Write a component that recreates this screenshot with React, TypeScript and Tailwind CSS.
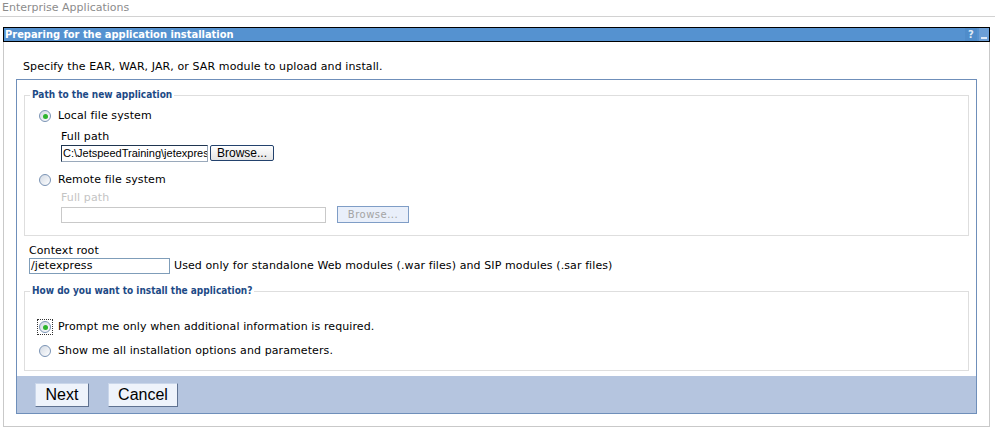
const Radio = ({ checked, focus }: { checked?: boolean; focus?: boolean }) => (
  <span
    className={`flex h-[14px] w-[14px] shrink-0 items-center justify-center ${
      focus ? "outline-1 outline-dotted outline-[#333]" : ""
    }`}
  >
    <span className="flex h-[12px] w-[12px] items-center justify-center rounded-full border border-[#7a93b4] bg-gradient-to-br from-[#d3dae4] to-white">
      {checked && <span className="h-[5px] w-[5px] rounded-full bg-[#2db42d]" />}
    </span>
  </span>
);

const Legend = ({ children }: { children: string }) => (
  <legend className="ml-[5px] px-[2px] font-['DejaVu_Sans_Condensed','DejaVu_Sans',sans-serif] text-[10px] font-bold leading-[14px] tracking-normal text-[#1d4a86]">
    {children}
  </legend>
);

const App = () => {
  return (
    <div className="h-[437px] w-[998px] overflow-hidden bg-white font-['DejaVu_Sans',sans-serif] text-[11px] tracking-[0.1px] text-black">
      <div className="h-[17px] w-[995px] border-b border-[#d2d2d2] pl-[2px] text-[11px] leading-[16px] tracking-normal text-[#8c8c8c]">
        Enterprise Applications
      </div>

      <div className="ml-[3px] mt-[10px] w-[987px]">
        {/* title bar */}
        <div className="flex h-[15px] items-center justify-between border border-black bg-[#5592d0] pl-[1px]">
          <span className="font-['DejaVu_Sans_Condensed','DejaVu_Sans',sans-serif] text-[11px] font-bold leading-[13px] tracking-normal text-white">
            Preparing for the application installation
          </span>
          <div className="flex h-full items-center">
            <span className="flex h-full w-[12px] items-center justify-center bg-[#4f8cca] text-[10px] font-bold text-[#dfe9f6]">?</span>
            <span className="ml-[2px] flex h-full w-[10px] items-end justify-center bg-[#6d9fd6] pb-[2px]">
              <span className="h-[2px] w-[6px] bg-[#dfe9f6]" />
            </span>
          </div>
        </div>

        <div className="border-x border-b border-[#c9c9c9] px-[12px] pb-[12px] pt-[18px]">
          <p className="ml-[7px] leading-[14px]">Specify the EAR, WAR, JAR, or SAR module to upload and install.</p>

          <div className="mt-[5px] border border-[#6f8fba]">
            <div className="px-[7px] pt-[8px]">
              {/* path fieldset */}
              <fieldset className="border border-[#dedede] pb-[12px]">
                <Legend>Path to the new application</Legend>
                <div className="pl-[13px] pt-[7px]">
                  <div className="flex h-[14px] items-center">
                    <Radio checked />
                    <span className="ml-[6px] leading-[14px]">Local file system</span>
                  </div>
                  <div className="ml-[23px] mt-[7px] leading-[14px]">Full path</div>
                  <div className="ml-[23px] mt-[1px] flex items-start">
                    <div className="h-[17px] w-[147px] overflow-hidden whitespace-nowrap border border-[#1f3550] border-b-[#9aa9bb] border-r-[#9aa9bb] pl-[1px] font-['Liberation_Sans',sans-serif] text-[11px] leading-[15px] tracking-normal">
                      C:\JetspeedTraining\jetexpres
                    </div>
                    <button className="ml-[2px] h-[16px] w-[64px] rounded-[2px] border border-[#23426d] bg-gradient-to-b from-white to-[#e4e4e4] font-['Liberation_Sans',sans-serif] text-[12px] leading-[13px] tracking-normal">
                      Browse...
                    </button>
                  </div>
                  <div className="mt-[11px] flex h-[14px] items-center">
                    <Radio />
                    <span className="ml-[6px] leading-[14px]">Remote file system</span>
                  </div>
                  <div className="ml-[23px] mt-[4px] leading-[14px] text-[#c4c4c4]">Full path</div>
                  <div className="ml-[23px] mt-[1px] flex items-start">
                    <div className="mt-[1px] h-[16px] w-[265px] border border-[#c9c9c9]" />
                    <button className="ml-[11px] h-[17px] w-[72px] border border-[#7f9dc6] bg-[#e9effa] text-[10px] leading-[15px] tracking-[0.5px] text-[#a4a4a4]">
                      Browse...
                    </button>
                  </div>
                </div>
              </fieldset>

              {/* context root */}
              <div className="ml-[5px] mt-[8px] leading-[14px]">Context root</div>
              <div className="ml-[5px] flex items-center">
                <div className="h-[16px] w-[141px] border border-[#7f9db9] pl-[1px] leading-[14px]">/jetexpress</div>
                <span className="ml-[4px] leading-[14px]">
                  Used only for standalone Web modules (.war files) and SIP modules (.sar files)
                </span>
              </div>

              {/* install fieldset */}
              <fieldset className="mt-[10px] border border-[#dedede] pb-[12px]">
                <Legend>How do you want to install the application?</Legend>
                <div className="pl-[13px] pt-[22px]">
                  <div className="flex h-[14px] items-center">
                    <Radio checked focus />
                    <span className="ml-[6px] leading-[14px]">Prompt me only when additional information is required.</span>
                  </div>
                  <div className="mt-[10px] flex h-[14px] items-center">
                    <Radio />
                    <span className="ml-[6px] leading-[14px]">Show me all installation options and parameters.</span>
                  </div>
                </div>
              </fieldset>
            </div>

            {/* footer */}
            <div className="mt-[5px] flex h-[37px] items-center gap-[19px] bg-[#b5c5df] pl-[18px]">
              <button className="h-[24px] w-[54px] border border-[#c9d6ea] border-b-[#5f7291] border-r-[#5f7291] bg-[#eef3fb] font-['Liberation_Sans',sans-serif] text-[16px] leading-[20px] tracking-normal">
                Next
              </button>
              <button className="h-[24px] w-[70px] border border-[#c9d6ea] border-b-[#5f7291] border-r-[#5f7291] bg-[#eef3fb] font-['Liberation_Sans',sans-serif] text-[16px] leading-[20px] tracking-normal">
                Cancel
              </button>
            </div>
          </div>
        </div>
      </div>
    </div>
  );
};

export default App;
